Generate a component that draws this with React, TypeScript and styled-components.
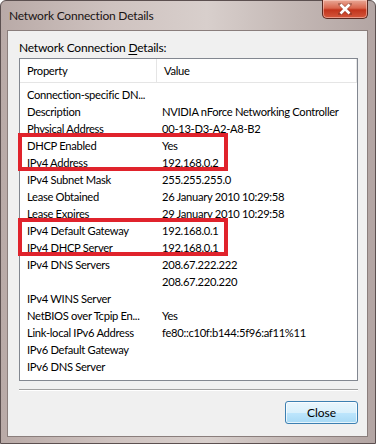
import React from 'react'
import styled, { createGlobalStyle } from 'styled-components'

const GlobalStyle = createGlobalStyle`
  html, body {
    margin: 0;
    padding: 0;
    background: #fff;
  }
  body {
    font-family: Lato, "Noto Sans", "Liberation Sans", sans-serif;
    font-size: 11.2px;
    letter-spacing: -0.3px;
    color: #000;
  }
`

type Row = { prop: string; value: string }

const rows: Row[] = [
  { prop: 'Connection-specific DN...', value: '' },
  { prop: 'Description', value: 'NVIDIA nForce Networking Controller' },
  { prop: 'Physical Address', value: '00-13-D3-A2-A8-B2' },
  { prop: 'DHCP Enabled', value: 'Yes' },
  { prop: 'IPv4 Address', value: '192.168.0.2' },
  { prop: 'IPv4 Subnet Mask', value: '255.255.255.0' },
  { prop: 'Lease Obtained', value: '26 January 2010 10:29:58' },
  { prop: 'Lease Expires', value: '29 January 2010 10:29:58' },
  { prop: 'IPv4 Default Gateway', value: '192.168.0.1' },
  { prop: 'IPv4 DHCP Server', value: '192.168.0.1' },
  { prop: 'IPv4 DNS Servers', value: '208.67.222.222' },
  { prop: '', value: '208.67.220.220' },
  { prop: 'IPv4 WINS Server', value: '' },
  { prop: 'NetBIOS over Tcpip En...', value: 'Yes' },
  { prop: 'Link-local IPv6 Address', value: 'fe80::c10f:b144:5f96:af11%11' },
  { prop: 'IPv6 Default Gateway', value: '' },
  { prop: 'IPv6 DNS Server', value: '' },
]

// pairs of rows that get the red marker box
const highlighted = [[3, 4], [8, 9]]

function App() {
  const groups: Row[][] = []
  let i = 0
  while (i < rows.length) {
    const h = highlighted.find(g => g[0] === i)
    if (h) {
      groups.push(rows.slice(h[0], h[1] + 1))
      i = h[1] + 1
    } else {
      groups.push([rows[i]])
      i++
    }
  }

  return (
    <>
      <GlobalStyle />
      <Window>
        <TitleBar>
          <Title>Network Connection Details</Title>
          <CloseX>
            <svg width="14" height="12" viewBox="0 0 14 12">
              <path d="M2 1 L12 11 M12 1 L2 11" stroke="#5a2a20" strokeWidth="4" strokeLinecap="square" opacity="0.35" />
              <path d="M2.5 1.5 L11.5 10.5 M11.5 1.5 L2.5 10.5" stroke="#fff" strokeWidth="2.6" />
            </svg>
          </CloseX>
        </TitleBar>
        <Body>
          <Caption>
            Network Connection <u>D</u>etails:
          </Caption>
          <ListBox>
            <Header>
              <HeadCell $w={137}>Property</HeadCell>
              <HeadCell>Value</HeadCell>
            </Header>
            <Rows>
              {groups.map((g, gi) =>
                g.length > 1 ? (
                  <Marked key={gi}>
                    {g.map((r, ri) => (
                      <ItemRow key={ri}>
                        <PropCell>{r.prop}</PropCell>
                        <ValueCell>{r.value}</ValueCell>
                      </ItemRow>
                    ))}
                  </Marked>
                ) : (
                  <ItemRow key={gi}>
                    <PropCell>{g[0].prop}</PropCell>
                    <ValueCell>{g[0].value}</ValueCell>
                  </ItemRow>
                )
              )}
            </Rows>
          </ListBox>
          <Separator />
          <ButtonRow>
            <CloseButton>Close</CloseButton>
          </ButtonRow>
        </Body>
      </Window>
    </>
  )
}

const Window = styled.div`
  width: 376px;
  height: 444px;
  box-sizing: border-box;
  display: flex;
  flex-direction: column;
  padding: 0 7px 6px 6px;
  background: linear-gradient(90deg, #b9aaa7 0%, #cfc3c0 30%, #d8cfcc 55%, #c2b6b3 80%, #b3a5a3 100%);
  border: 1px solid #5c5050;
  border-radius: 6px 6px 0 0;
`

const TitleBar = styled.div`
  height: 29px;
  display: flex;
  align-items: flex-start;
  justify-content: space-between;
`

const Title = styled.div`
  padding: 7px 0 0 2px;
  font-size: 12px;
  letter-spacing: -0.2px;
  color: #1a1414;
`

const CloseX = styled.div`
  width: 46px;
  height: 19px;
  margin-top: -1px;
  box-sizing: border-box;
  display: flex;
  align-items: center;
  justify-content: center;
  border: 1px solid #5a2a22;
  border-top: none;
  border-radius: 0 0 5px 5px;
  background: linear-gradient(180deg, #e9a896 0%, #d9664d 45%, #c2341c 55%, #d4573c 100%);
  box-shadow: inset 0 0 0 1px rgba(255, 220, 210, 0.5);
`

const Body = styled.div`
  flex: 1;
  display: flex;
  flex-direction: column;
  background: #f0f0f0;
  border: 1px solid #8a7e7c;
  padding: 8px 9px 0 11px;
`

const Caption = styled.div`
  height: 19px;
  line-height: 18px;
  font-size: 12px;
  letter-spacing: -0.2px;
  u {
    text-decoration-thickness: 1px;
    text-underline-offset: 2px;
  }
`

const ListBox = styled.div`
  height: 323px;
  box-sizing: border-box;
  background: #fff;
  border: 1px solid #828790;
  display: flex;
  flex-direction: column;
`

const Header = styled.div`
  height: 23px;
  display: flex;
  border-bottom: 1px solid #e5e5e5;
`

const HeadCell = styled.div<{ $w?: number }>`
  ${p => (p.$w ? `width: ${p.$w}px;` : 'flex: 1;')}
  flex-shrink: 0;
  padding-left: 7px;
  line-height: 23px;
  border-right: 1px solid #e5e5e5;
  box-sizing: border-box;
`

const Rows = styled.div`
  padding-top: 3px;
  display: flex;
  flex-direction: column;
`

const ItemRow = styled.div`
  height: 17px;
  line-height: 17px;
  display: flex;
  white-space: nowrap;
`

const PropCell = styled.div`
  width: 137px;
  flex-shrink: 0;
  padding-left: 7px;
  box-sizing: border-box;
  overflow: hidden;
`

const ValueCell = styled.div`
  padding-left: 5px;
`

const Marked = styled.div`
  position: relative;
  &::after {
    content: '';
    position: absolute;
    top: -4px;
    bottom: 0;
    left: -2px;
    width: 210px;
    border: 4px solid #e0232c;
    box-sizing: border-box;
    pointer-events: none;
  }
`

const Separator = styled.div`
  margin-top: 8px;
  height: 1px;
  background: #a0a0a0;
  border-bottom: 1px solid #fff;
`

const ButtonRow = styled.div`
  display: flex;
  justify-content: flex-end;
  padding-top: 10px;
`

const CloseButton = styled.button`
  width: 73px;
  height: 23px;
  font-family: inherit;
  font-size: 12px;
  color: #000;
  border: 1px solid #3c7fb1;
  border-radius: 3px;
  background: linear-gradient(180deg, #eaf6fd 0%, #d9f0fc 50%, #bee6fd 51%, #a7d9f5 100%);
  box-shadow: inset 0 0 0 1px rgba(255, 255, 255, 0.7);
  padding: 0;
`

export default App
